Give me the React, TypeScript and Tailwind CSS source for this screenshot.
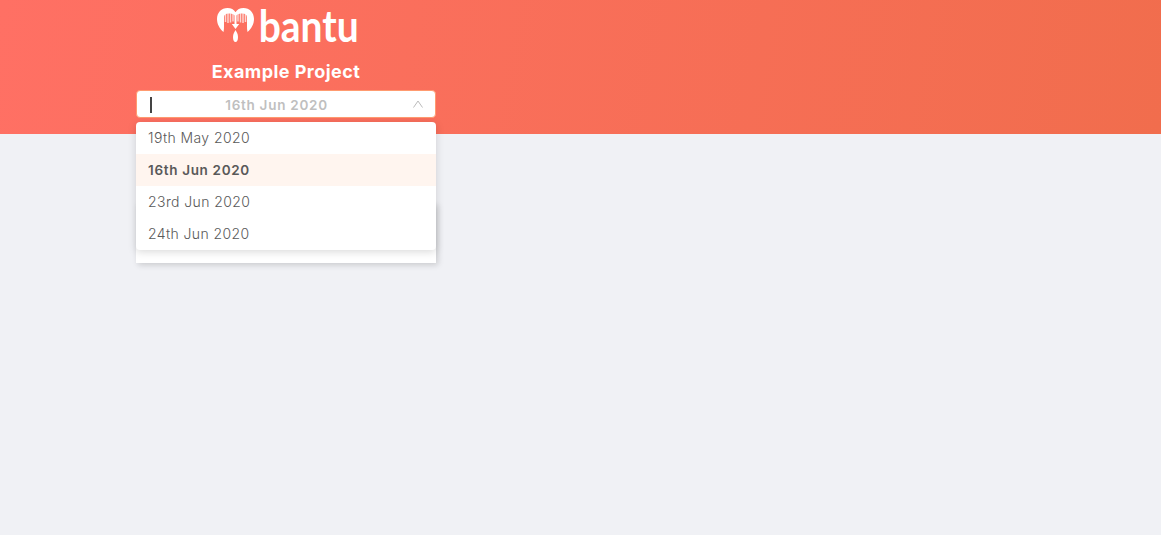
import { useState } from "react";
import clsx from "clsx";

const dates: string[] = ["19th May 2020", "16th Jun 2020", "23rd Jun 2020", "24th Jun 2020"];

const Logo: React.FC = () => {
    return (
        <svg width="146" height="54" viewBox="-1 -5 146 54" className="block overflow-visible" role="img" aria-label="bantu">
            <path
                fill="#fff"
                d="M7.500 27C3.500 23.500 1 19 1 14C1 7.500 5.500 3 11.500 3C15 3 18 4.500 19.500 7.300C21 4.500 24 3 27.500 3C33.500 3 38 7.500 38 14C38 19 35.500 23.500 31.500 27C31 25 31 23 31 21V12C31 10 29 8.500 26.500 8.500C23.500 8.500 21.500 9 19.500 11C17.500 9 15.500 8.500 12.500 8.500C10 8.500 8 10 8 12V21C8 23 8 25 7.500 27Z"
            />
            <path stroke="#fff" strokeWidth="1.5" opacity="0.7" d="M9.500 9V17M12 8V18M14.500 7.500V17.500M17 8V16.500M22 8V16.500M24.500 7.500V17.500M27 8V18M29.500 9V17" />
            <path fill="#fff" d="M18.500 7H20.500V19H23.200L19.500 24L15.800 19H18.500Z" />
            <path fill="#fff" d="M19.500 25C20.500 27 22 28.500 22 32C22 35.500 21 37 19.500 37C18 37 17 35.500 17 32C17 28.500 18.500 27 19.500 25Z" />
            <text x="42.700" y="37" fill="#fff" fontFamily="Lato, sans-serif" fontSize="43.500" fontWeight="700" textLength="100" lengthAdjust="spacingAndGlyphs">
                bantu
            </text>
        </svg>
    );
};

const App: React.FC = () => {
    const [open, setOpen] = useState<boolean>(true);
    const [selected, setSelected] = useState<string>("16th Jun 2020");

    const handleSelect = (date: string) => {
        setSelected(date);
        setOpen(false);
    };

    return (
        <div className="min-h-screen bg-[#f0f1f5] pb-4 font-['Inter',sans-serif] text-sm text-[#595959]">
            <header className="h-[134px] bg-[linear-gradient(100deg,#ff7064,#f16d4d)] pl-[136px]">
                <div className="flex w-[300px] flex-col items-center">
                    <div className="pl-[4px]">
                        <Logo />
                    </div>
                    <h1 className="mt-[6px] text-[18px] leading-6 font-bold tracking-[0.45px] whitespace-nowrap text-white">Example Project</h1>
                    <div className="relative mt-[6px] w-full">
                        <button
                            type="button"
                            onClick={() => setOpen(!open)}
                            className="flex h-7 w-full items-center rounded-[4px] border border-[#ff9b70] bg-white pr-3 pl-[13px]"
                        >
                            <span className="mt-px h-4 w-[2px] bg-[#444]" />
                            <span className="flex-1 pt-[3px] pr-[12px] text-center text-[13.5px] font-semibold tracking-[0.72px] text-[#bfbfbf]">{selected}</span>
                            <svg width="10" height="8" viewBox="0 0 10 8" fill="none" stroke="#bbb" className="shrink-0">
                                <path d="M0.500 7.500L5 1L9.500 7.500" />
                            </svg>
                        </button>
                        {open && (
                            <ul className="absolute top-8 left-0 z-10 w-full overflow-hidden rounded-[4px] bg-white shadow-[0_2px_8px_rgba(0,0,0,0.15)]">
                                {dates.map((date) => (
                                    <li
                                        key={date}
                                        onClick={() => handleSelect(date)}
                                        className={clsx(
                                            "h-8 cursor-pointer px-3 leading-8",
                                            date === selected ? "bg-[#fff5ef] text-[13.5px] font-semibold tracking-[0.67px]" : "font-light tracking-[0.4px]"
                                        )}
                                    >
                                        {date}
                                    </li>
                                ))}
                            </ul>
                        )}
                    </div>
                </div>
            </header>
            <main className="pt-[69px] pl-[136px]">
                <div className="h-[60px] w-[300px] bg-white shadow-[2px_2px_6px_rgba(0,0,0,0.16)]" />
            </main>
        </div>
    );
};

export default App;
